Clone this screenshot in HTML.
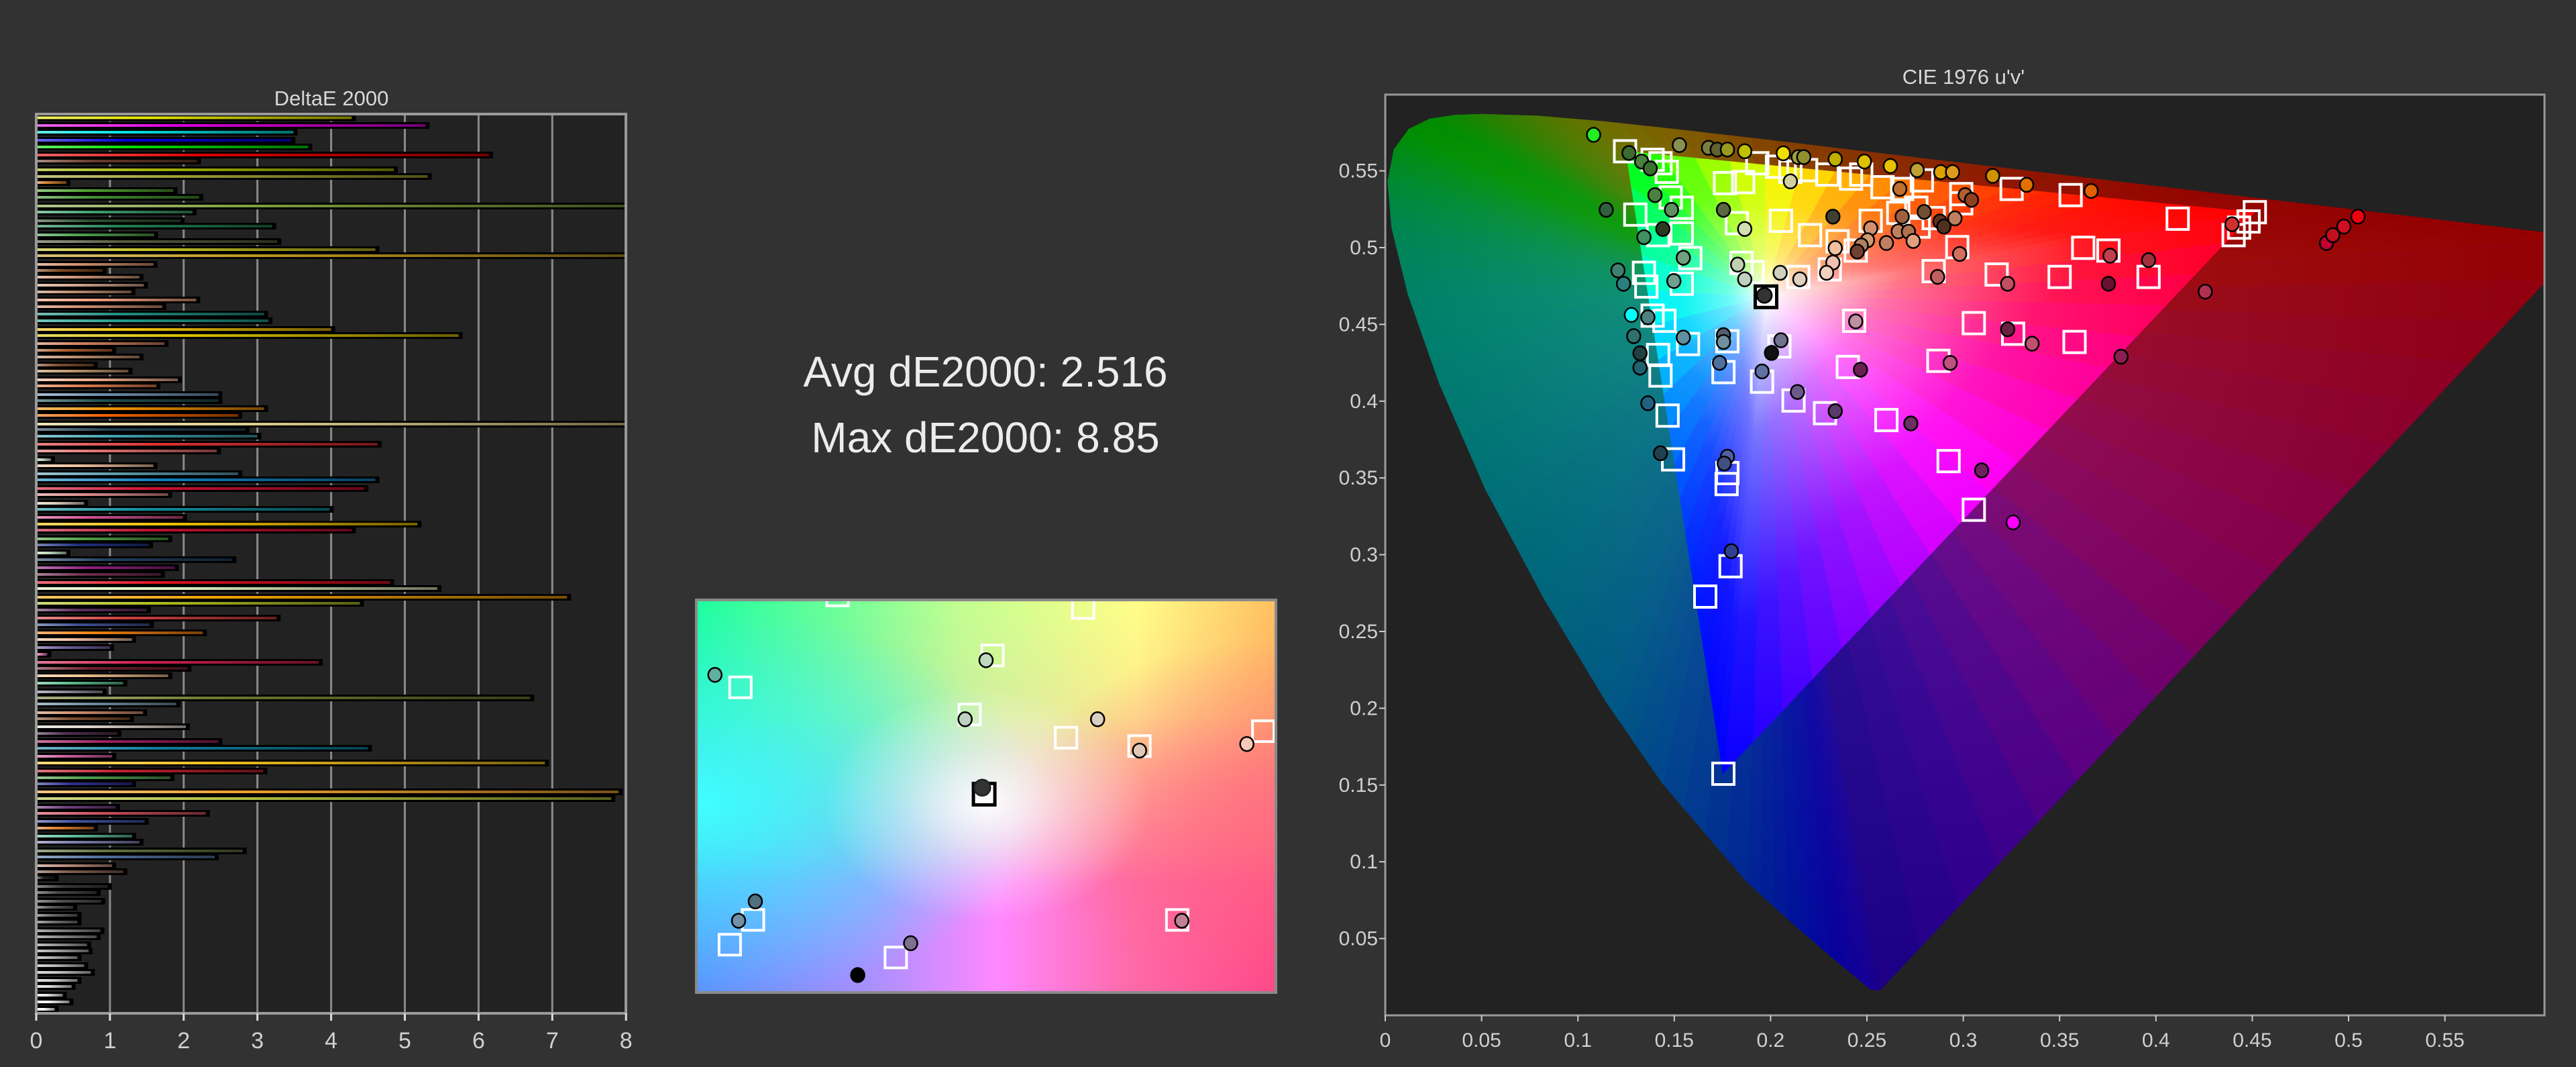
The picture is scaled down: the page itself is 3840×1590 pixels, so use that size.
<!DOCTYPE html>
<html><head><meta charset="utf-8">
<style>
html,body{margin:0;padding:0;background:#323232;width:3840px;height:1590px;overflow:hidden;position:relative;font-family:"Liberation Sans Narrow","Liberation Sans",sans-serif}
#box{position:absolute;left:1038px;top:894px;width:864px;height:585px;overflow:hidden;background:linear-gradient(90deg,#5a90ff 0%,#a890ff 30%,#ff88ff 52%,#ff6aa8 75%,#ff4888 100%)}
#box .top{position:absolute;inset:0;background:linear-gradient(90deg,#1dffa0 0%,#70ff98 25%,#c0ff90 45%,#ffff88 76%,#ffc060 100%);-webkit-mask-image:linear-gradient(180deg,#000 0%,rgba(0,0,0,.85) 30%,rgba(0,0,0,0) 72%);mask-image:linear-gradient(180deg,#000 0%,rgba(0,0,0,.85) 30%,rgba(0,0,0,0) 72%)}
#box .cy{position:absolute;inset:0;background:radial-gradient(ellipse 60% 50% at 0% 52%,rgba(64,255,255,1),rgba(64,255,255,.6) 40%,rgba(64,255,255,0))}
#box .rd{position:absolute;inset:0;background:radial-gradient(ellipse 45% 45% at 100% 55%,rgba(255,110,130,.8),rgba(255,110,130,0))}
#box .wh{position:absolute;inset:0;background:radial-gradient(ellipse 28% 30% at 50% 52%,rgba(255,255,255,.95),rgba(255,255,255,.4) 50%,rgba(255,255,255,0))}
svg{position:absolute;left:0;top:0}
</style></head><body>
<div id="box"><div class="top"></div><div class="cy"></div><div class="rd"></div><div class="wh"></div></div>
<svg id="s" width="3840" height="1590" xmlns="http://www.w3.org/2000/svg">
<defs id="defs">
<clipPath id="cieclip"><rect x="2065" y="141" width="1728" height="1372"/></clipPath>
<clipPath id="boxclip"><rect x="1038" y="894" width="864" height="585"/></clipPath>
</defs>
<rect x="54" y="170" width="879" height="1340" fill="#222"/>
<rect x="2065" y="141" width="1728" height="1372" fill="#222"/>
<g id="grid"></g>
<g id="bars"></g>
<rect x="54" y="170" width="879" height="1340" fill="none" stroke="#9a9a9a" stroke-width="4"/>
<g clip-path="url(#cieclip)"><g id="cie" transform="translate(2065,1513) scale(2872,-2288)"></g><g id="cmk"></g></g>
<rect x="2065" y="141" width="1728" height="1372" fill="none" stroke="#999" stroke-width="3"/>
<g clip-path="url(#boxclip)" id="bmk"></g>
<rect x="1038" y="894" width="864" height="585" fill="none" stroke="#8a8a8a" stroke-width="4"/>
<g id="ticks" fill="#d0d0d0" font-family="Liberation Sans Narrow, Liberation Sans, sans-serif"></g>
<text x="494" y="157" fill="#d8d8d8" font-size="31" text-anchor="middle" font-family="Liberation Sans Narrow, Liberation Sans, sans-serif">DeltaE 2000</text>
<text x="2927" y="125" fill="#d8d8d8" font-size="31" text-anchor="middle" font-family="Liberation Sans Narrow, Liberation Sans, sans-serif">CIE 1976 u'v'</text>
<text x="1469" y="576" fill="#ececec" font-size="64" text-anchor="middle" font-family="Liberation Sans, sans-serif">Avg dE2000: 2.516</text>
<text x="1469" y="674" fill="#ececec" font-size="64" text-anchor="middle" font-family="Liberation Sans, sans-serif">Max dE2000: 8.85</text>
</svg>
<script>
var NS="http://www.w3.org/2000/svg";
function el(t,a,p){var e=document.createElementNS(NS,t);for(var k in a)e.setAttribute(k,a[k]);if(p)p.appendChild(e);return e;}
var defs=document.getElementById('defs');
function hx(c){return [parseInt(c.substr(1,2),16),parseInt(c.substr(3,2),16),parseInt(c.substr(5,2),16)];}
function rgb(a){return 'rgb('+a.map(function(v){return Math.max(0,Math.min(255,Math.round(v)))}).join(',')+')';}
function mix(a,b,t){return [a[0]+(b[0]-a[0])*t,a[1]+(b[1]-a[1])*t,a[2]+(b[2]-a[2])*t];}
var gid=0;
function lg(x1,y1,x2,y2,stops,us){var id='g'+(gid++);var g=el('linearGradient',{id:id,x1:x1,y1:y1,x2:x2,y2:y2},defs);if(us)g.setAttribute('gradientUnits','userSpaceOnUse');stops.forEach(function(s){el('stop',{offset:s[0],'stop-color':s[1]},g)});return 'url(#'+id+')';}
var grid=document.getElementById('grid'),ticks=document.getElementById('ticks');
for(var i=0;i<=8;i++){var x=54+i*109.9;if(i>0&&i<8)el('line',{x1:x,y1:170,x2:x,y2:1510,stroke:'#8a8a8a','stroke-width':3},grid);
el('line',{x1:x,y1:1510,x2:x,y2:1521,stroke:'#ddd','stroke-width':3},ticks);
var t=el('text',{x:x,y:1562,'font-size':34,'text-anchor':'middle'},ticks);t.textContent=i;}
var B=[[175.5,4.28,'#e8e800'],[187,5.28,'#e000e0'],[197,3.49,'#00e0e0'],[209,3.46,'#0000e0'],[219,3.69,'#00e000'],[231,6.14,'#e00000'],[240,2.18,'#6a3a2a'],[253,4.85,'#a0b000'],[263,5.31,'#a0a030'],[272,0.41,'#d08030'],[284,1.86,'#50a030'],[294,2.21,'#409030'],[307,8,'#80a040'],[316,2.12,'#40a070'],[329,1.96,'#305030'],[337,3.2,'#208050'],[350,1.6,'#50a050'],[360,3.27,'#5a5a40'],[372,4.6,'#c0c020'],[381,8,'#c09a20'],[394,1.59,'#d09070'],[403,0.9,'#804a20'],[413,1.4,'#d09a7a'],[425,1.46,'#d8a890'],[435,1.29,'#c09070'],[447,2.17,'#f0a080'],[457,1.71,'#d09070'],[468,3.09,'#209080'],[478,3.15,'#20a090'],[491,4.0,'#f0c000'],[500,5.73,'#d8c000'],[512,1.74,'#d08060'],[522,1.03,'#b06030'],[532,1.4,'#c09070'],[544,0.78,'#805030'],[553,1.25,'#c09a70'],[566,1.92,'#f0b090'],[575,1.63,'#e08050'],[588,2.47,'#7090b0'],[597,2.47,'#205050'],[609,3.09,'#f09000'],[619,2.74,'#f06000'],[632,8,'#e0d090'],[640,2.84,'#204050'],[650,3.0,'#40a0b0'],[662,4.63,'#e03030'],[672,2.45,'#e07070'],[685,0.2,'#c0d0c0'],[694,1.59,'#f0c0a0'],[706,2.74,'#60a0b0'],[715,4.6,'#1080c0'],[728,4.45,'#d01030'],[737,1.79,'#e09090'],[750,0.65,'#e0d0c0'],[759,3.98,'#1090a0'],[771,1.99,'#d05090'],[781,5.17,'#f0c000'],[790,4.28,'#c01030'],[803,1.79,'#50a040'],[812,1.53,'#203080'],[824,0.41,'#c0e0c0'],[834,2.66,'#204060'],[846,1.88,'#902080'],[856,1.69,'#703050'],[868,4.8,'#e01020'],[877,5.44,'#e0f0c0'],[890,7.2,'#f0a000'],[899,4.39,'#b0c020'],[909,1.5,'#603060'],[921,3.26,'#d04040'],[931,1.54,'#405090'],[943,2.26,'#f08010'],[953,1.3,'#f0c0a0'],[965,1.0,'#7060a0'],[975,0.15,'#d070a0'],[987,3.83,'#d02050'],[996,2.05,'#702030'],[1007,1.79,'#f0c090'],[1018,1.18,'#60c090'],[1031,0.9,'#9090a0'],[1040,6.7,'#707a30'],[1049,1.9,'#7090a0'],[1062,1.45,'#d09070'],[1071,1.27,'#805030'],[1083,2.03,'#e0d8d0'],[1093,1.1,'#503050'],[1105,2.47,'#a02060'],[1115,4.5,'#1080a0'],[1127,1.03,'#d060a0'],[1137,6.9,'#f0c020'],[1149,3.08,'#c02030'],[1159,1.82,'#50a050'],[1168,1.3,'#303090'],[1180,7.9,'#f0a030'],[1190,7.8,'#b0c040'],[1203,1.08,'#704080'],[1212,2.3,'#d05060'],[1224,1.47,'#4050a0'],[1234,0.78,'#e08030'],[1246,1.3,'#60c0a0'],[1255,1.4,'#8080b0'],[1268,2.8,'#607040'],[1277,2.42,'#5070a0'],[1290,1.03,'#c09080'],[1299,1.18,'#806050'],[1308,0.25,'#202020']];
var gv=[0.97,0.82,0.88,0.5,0.56,0.56,0.87,0.82,0.69,0.71,0.56,0.65,0.74,0.56,0.48,0.36,0.45,0.25];
gv.forEach(function(v,i){var y=[1321,1330,1343,1352,1364,1374,1387,1396,1408,1417,1427,1439,1449,1461,1470,1483,1493,1504][i];var l=Math.round(60+i*(195/17));var h=l.toString(16);if(h.length<2)h='0'+h;B.push([y,v,'#'+h+h+h]);});
var bg=document.getElementById('bars');
B.forEach(function(b){var y=b[0],w=b[1]*109.9,c=hx(b[2]);
var bw=Math.min(w+4,877);el('rect',{x:56,y:y-5,width:bw,height:10,fill:'#000'},bg);
var f=lg(0,0,1,0,[[0,rgb(mix(c,[255,255,255],0.4))],[0.35,rgb(c)],[1,rgb(mix(c,[0,0,0],0.5))]]);
el('rect',{x:56,y:y-2,width:Math.min(w-2,875),height:4,fill:f},bg);});
// CIE
var XY=[[0.1741,0.0050],[0.1714,0.0051],[0.1644,0.0109],[0.1566,0.0177],[0.1440,0.0297],[0.1241,0.0578],[0.1096,0.0868],[0.0913,0.1327],[0.0687,0.2007],[0.0454,0.2950],[0.0235,0.4127],[0.0082,0.5384],[0.0039,0.6548],[0.0139,0.7502],[0.0389,0.8120],[0.0743,0.8338],[0.1142,0.8262],[0.1547,0.8059],[0.2296,0.7543],[0.3016,0.6923],[0.3731,0.6245],[0.4441,0.5547],[0.5125,0.4866],[0.5752,0.4242],[0.6270,0.3725],[0.6915,0.3083],[0.7190,0.2809],[0.7347,0.2653]];
var CL=['#1a0090','#1800a0','#0800a8','#0010a8','#0028a0','#004a98','#00608e','#006e86','#007a80','#00857a','#008c70','#009058','#009438','#009818','#009a00','#009800','#109400','#258c00','#508400','#787800','#8a6400','#8e4800','#943000','#9a1800','#a00800','#a00000','#a00000','#a00000'];
var L=XY.map(function(p){var d=-2*p[0]+12*p[1]+3;return [4*p[0]/d,9*p[1]/d];});
var cie=document.getElementById('cie');var W=[0.1978,0.4683];
function tri(a,b,cA,cB,inner){var m=[(a[0]+b[0])/2,(a[1]+b[1])/2];var c=mix(hx(cA),hx(cB),0.5);
var st=inner?[[0,'#ffffff'],[0.3,rgb(mix(c,[255,255,255],0.45))],[0.7,rgb(mix(c,[255,255,255],0.08))],[1,rgb(c)]]:[[0,rgb(mix(c,[255,255,255],0.1))],[1,rgb(mix(c,[0,0,0],0.08))]];
var f=lg(W[0],W[1],m[0],m[1],st,true);
el('path',{d:'M'+W[0]+','+W[1]+'L'+a[0]+','+a[1]+'L'+b[0]+','+b[1]+'Z',fill:f,stroke:f,'stroke-width':1.5,'vector-effect':'non-scaling-stroke'},cie);}
function hex(a){return '#'+a.map(function(v){var s=Math.max(0,Math.min(255,Math.round(v))).toString(16);return s.length<2?'0'+s:s}).join('');}
for(var i=0;i<L.length-1;i++){var n=4;for(var k=0;k<n;k++){var t0=k/n,t1=(k+1)/n;
var a=[L[i][0]+(L[i+1][0]-L[i][0])*t0,L[i][1]+(L[i+1][1]-L[i][1])*t0],b=[L[i][0]+(L[i+1][0]-L[i][0])*t1,L[i][1]+(L[i+1][1]-L[i][1])*t1];
tri(a,b,hex(mix(hx(CL[i]),hx(CL[i+1]),t0)),hex(mix(hx(CL[i]),hx(CL[i+1]),t1)),false);}}
var pc=['#a00000','#9a0020','#940040','#8a0060','#6a0088','#3a009a','#1a0090'];var A=L[L.length-1],Z=L[0];
for(var i=0;i<6;i++){for(var k=0;k<3;k++){var s0=(i+k/3)/6,s1=(i+(k+1)/3)/6;var p=[A[0]+(Z[0]-A[0])*s0,A[1]+(Z[1]-A[1])*s0],q=[A[0]+(Z[0]-A[0])*s1,A[1]+(Z[1]-A[1])*s1];tri(p,q,hex(mix(hx(pc[i]),hx(pc[i+1]),k/3)),hex(mix(hx(pc[i]),hx(pc[i+1]),(k+1)/3)),false);}}
function hsv(h){h=((h%360)+360)%360;var x=1-Math.abs((h/60)%2-1);var r=[[1,x,0],[x,1,0],[0,1,x],[0,x,1],[x,0,1],[1,0,x]][Math.floor(h/60)%6];return '#'+r.map(function(v){var s=Math.round(v*255).toString(16);return s.length<2?'0'+s:s}).join('');}
var R=[0.4507,0.5229],G=[0.125,0.5625],Bl=[0.1754,0.1579];
function edge(P,Q,hf){var n=18;for(var i=0;i<n;i++){var t0=i/n,t1=(i+1)/n;var a=[P[0]+(Q[0]-P[0])*t0,P[1]+(Q[1]-P[1])*t0],b=[P[0]+(Q[0]-P[0])*t1,P[1]+(Q[1]-P[1])*t1];tri(a,b,hsv(hf(t0)),hsv(hf(t1)),true);}}
edge(G,R,function(t){return 120*Math.pow(1-t,2.4)});
edge(R,Bl,function(t){return 360-120*t});
edge(Bl,G,function(t){return 240-120*Math.pow(t,2.4)});
var cm=document.getElementById('cmk');
var C=[[320,237,'#22ee22'],[365,290,'#3a6a30'],[381,315,'#4a8040'],[392,335,'#3a7030'],[429,267,'#8a9050'],[466,275,'#7a8040'],[477,280,'#606030'],[490,280,'#9a9a20'],[512,285,'#c0c000'],[561,291,'#f0e000'],[580,302,'#a0a040'],[587,302,'#909030'],[627,308,'#c0b000'],[664,315,'#e0c000'],[697,328,'#e8c000'],[731,340,'#c0a030'],[761,346,'#e0a000'],[776,346,'#e09a20'],[827,357,'#d09000'],[870,383,'#e07000'],[952,401,'#e06000'],[398,413,'#4a8040'],[336,456,'#306040'],[419,456,'#609060'],[485,456,'#5a6a40'],[408,512,'#2a3a20'],[384,536,'#409060'],[512,512,'#d0e0b0'],[570,373,'#d0d0a0'],[624,476,'#404030'],[709,395,'#c07030'],[792,413,'#b06030'],[800,427,'#904020'],[740,462,'#705030'],[712,476,'#a06040'],[760,490,'#603020'],[765,505,'#503020'],[779,481,'#c08060'],[672,510,'#d09070'],[707,519,'#c08060'],[720,520,'#b07050'],[726,547,'#e0a080'],[692,553,'#c08060'],[668,545,'#d09a70'],[660,560,'#b08060'],[655,578,'#704030'],[627,568,'#f0c0a0'],[624,610,'#f0c0b0'],[616,640,'#f0d0c0'],[582,659,'#e0d0c0'],[557,640,'#d0d0c0'],[512,659,'#c0d0c0'],[503,616,'#c0d0b0'],[434,596,'#70a080'],[422,664,'#70a090'],[351,633,'#408070'],[358,672,'#2a8080'],[368,763,'#00ffff'],[389,770,'#508080'],[371,825,'#307070'],[379,875,'#204040'],[379,917,'#206070'],[434,829,'#6090a0'],[485,822,'#506070'],[485,842,'#7090a0'],[480,903,'#5070a0'],[534,928,'#6070a0'],[558,837,'#707090'],[546,874,'#111111'],[579,988,'#6a5a8a'],[627,1044,'#5a3a6a'],[723,1080,'#6a3060'],[653,782,'#c090a0'],[659,923,'#6a2050'],[773,903,'#c05080'],[846,805,'#6a2040'],[877,847,'#c05070'],[990,885,'#8a2050'],[1097,695,'#b03050'],[974,672,'#6a1030'],[846,672,'#c05060'],[757,652,'#c06060'],[785,585,'#d07060'],[976,590,'#c04050'],[1025,603,'#a03040'],[1131,498,'#d03030'],[1251,553,'#c00030'],[1259,530,'#c01020'],[1273,505,'#d01020'],[1291,476,'#f00010'],[389,1021,'#206080'],[405,1167,'#204050'],[490,1177,'#5060a0'],[486,1197,'#405080'],[813,1217,'#702060'],[853,1369,'#ff00ff'],[495,1453,'#304090']];
var S=[[360,285],[395,310],[405,320],[413,345],[373,470],[418,420],[432,450],[402,530],[432,525],[443,597],[502,495],[487,378],[510,375],[528,320],[553,330],[570,345],[590,340],[617,353],[647,365],[660,353],[687,390],[712,395],[737,370],[787,410],[787,437],[851,395],[926,413],[1062,482],[1160,463],[1152,490],[1140,508],[1133,530],[558,488],[595,530],[630,548],[672,488],[707,465],[730,450],[733,505],[752,480],[782,565],[752,635],[832,645],[912,652],[942,567],[974,575],[1025,652],[651,780],[803,787],[853,818],[931,842],[758,897],[643,915],[522,638],[508,611],[580,652],[620,630],[653,575],[384,640],[387,680],[432,672],[395,765],[410,780],[440,848],[490,840],[402,880],[405,940],[485,930],[534,958],[556,855],[574,1013],[614,1050],[692,1070],[414,1057],[421,1185],[490,1225],[489,1257],[771,1190],[803,1332],[494,1497]];
function zx(X){return 2000+X*1.1735}function zy(Y){return 80+Y*0.5102}
S.forEach(function(s){el('rect',{x:zx(s[0])-16,y:zy(s[1])-16,width:32,height:32,fill:'none',stroke:'#fff','stroke-width':4},cm);});
[[2542,889],[2569,1153]].forEach(function(s){el('rect',{x:s[0]-16,y:s[1]-16,width:32,height:32,fill:'none',stroke:'#fff','stroke-width':4},cm);});
el('rect',{x:zx(539)-16,y:zy(710)-16,width:32,height:32,fill:'#fff',stroke:'#000','stroke-width':5},cm);
el('circle',{cx:zx(537),cy:zy(706),r:11,fill:'#333',stroke:'#000','stroke-width':2.5},cm);
C.forEach(function(c){el('ellipse',{cx:zx(c[0]),cy:zy(c[1]),rx:10,ry:10.5,fill:c[2],stroke:'#000','stroke-width':2.5},cm);});
var bm=document.getElementById('bmk');
function bx(X){return 1030+X*0.5676}function by(Y){return 880+Y*0.389}
[[385,20],[1030,68],[792,250],[130,372],[732,476],[985,565],[1178,597],[1503,540],[163,1263],[102,1358],[538,1407],[1277,1263]].forEach(function(s){el('rect',{x:bx(s[0])-16,y:by(s[1])-16,width:32,height:31,fill:'none',stroke:'#fff','stroke-width':4},bm);});
el('rect',{x:bx(770)-16,y:by(780)-16,width:32,height:32,fill:'#fff',stroke:'#000','stroke-width':5},bm);
el('circle',{cx:bx(765),cy:by(755),r:12,fill:'#333',stroke:'#222','stroke-width':2.5},bm);
[[63,323,'#60b0a0'],[775,267,'#c0d8c0'],[720,493,'#c0d0c0'],[1068,493,'#d8d0c0'],[1178,613,'#e0c8b8'],[1460,588,'#f8c8b8'],[169,1191,'#507080'],[125,1265,'#7090a8'],[577,1351,'#807090'],[438,1473,'#000000'],[1289,1265,'#c08098']].forEach(function(c){el('ellipse',{cx:bx(c[0]),cy:by(c[1]),rx:10,ry:10.5,fill:c[2],stroke:'#000','stroke-width':2.5},bm);});
for(var i=1;i<=11;i++){var v=i*0.05,y=1513-v*2288;el('line',{x1:2056,y1:y,x2:2065,y2:y,stroke:'#ccc','stroke-width':2},ticks);
var t=el('text',{x:2054,y:y+10,'font-size':30,'text-anchor':'end'},ticks);t.textContent=(Math.round(v*100)/100).toString();}
for(var i=0;i<=11;i++){var u=i*0.05,x=2065+u*2872;el('line',{x1:x,y1:1513,x2:x,y2:1522,stroke:'#ccc','stroke-width':2},ticks);
var t=el('text',{x:x,y:1560,'font-size':30,'text-anchor':'middle'},ticks);t.textContent=(Math.round(u*100)/100).toString();}
</script>
</body></html>
